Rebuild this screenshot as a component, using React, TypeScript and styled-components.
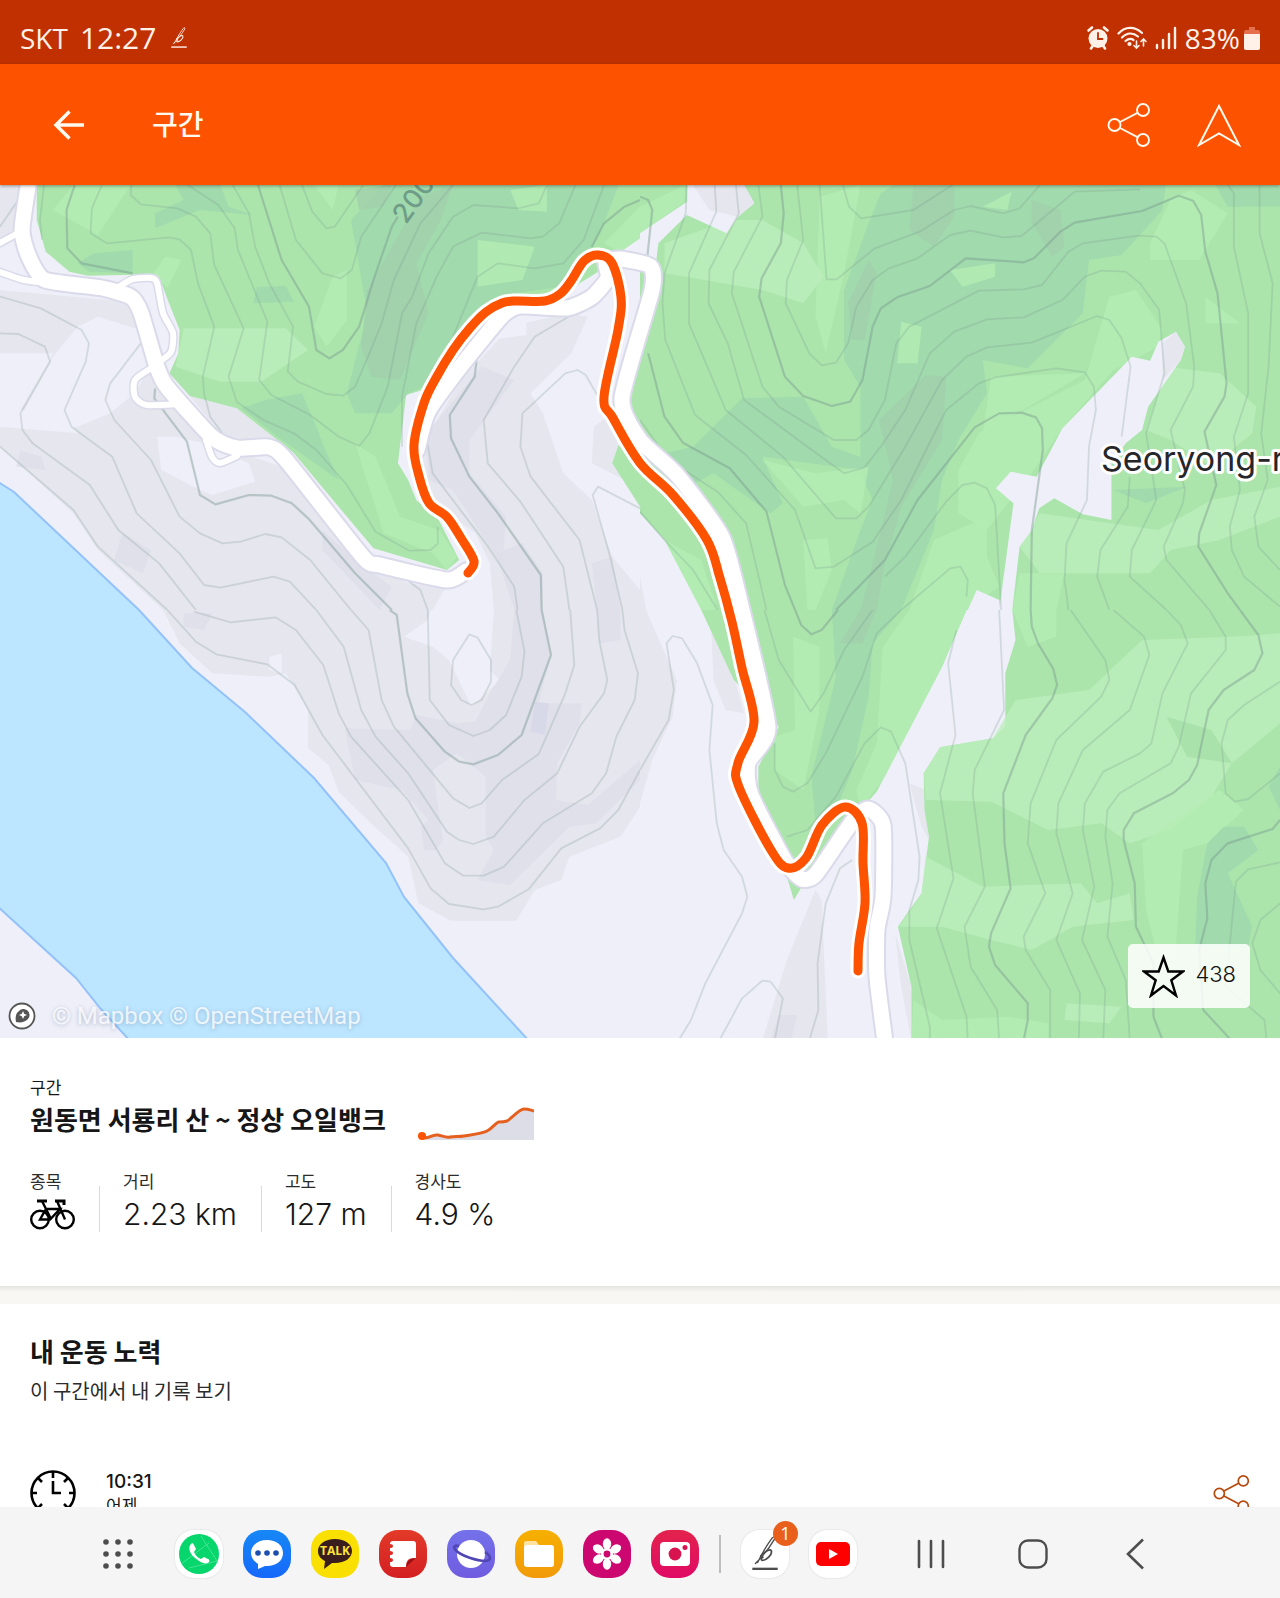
import React from "react";
import styled, { createGlobalStyle, css } from "styled-components";

const latin = `Inter, "Noto Sans CJK KR", sans-serif`;
const korean = `"Noto Sans CJK KR", "Noto Sans", sans-serif`;

const GlobalStyle = createGlobalStyle`
  *, *::before, *::after { box-sizing: border-box; }
  body { margin: 0; background: #fff; color: #161616; font-family: ${korean}; }
  button { margin: 0; padding: 0; border: 0; background: none; color: inherit; font: inherit; cursor: pointer; }
  h1, h2, p, dl, dt, dd { margin: 0; }
  svg { display: block; }
`;

/* ---------- shell ---------- */

const Screen = styled.div`
  display: flex;
  flex-direction: column;
  height: 100vh;
  overflow: hidden;
`;

const Scroll = styled.main`
  flex: 1;
  min-height: 0;
  overflow: hidden;
`;

const StatusBar = styled.div`
  display: flex;
  align-items: center;
  justify-content: space-between;
  flex: none;
  height: 64px;
  padding: 12px 20px 0;
  background: #c03000;
  color: #fff0e8;
  font: 400 30px/40px "Open Sans", "Noto Sans", sans-serif;
`;

const StatusGroup = styled.div<{ $gap: number }>`
  display: flex;
  align-items: center;
  gap: ${(p) => p.$gap}px;
`;

const Carrier = styled.span`
  font-size: 28px;
`;

const AppBar = styled.header`
  display: flex;
  align-items: center;
  flex: none;
  height: 121px;
  padding: 0 30px 0 45px;
  background: #fd5200;
  color: #fffaf0;
  position: relative;
  z-index: 1;
  box-shadow: 0 1px 3px rgba(60, 60, 40, 0.5);
`;

const BarTitle = styled.h1`
  flex: 1;
  margin: 0 0 4px 59px;
  font: 500 28px/40px ${korean};
`;

const IconButton = styled.button`
  display: grid;
  place-items: center;
  width: 48px;
  height: 48px;
`;

const BarActions = styled.div`
  display: flex;
  gap: 42px;
  padding-right: 7px;
`;

/* ---------- map ---------- */

const MapBox = styled.section`
  position: relative;
  overflow: hidden;

  > svg {
    width: 100%;
    height: auto;
  }
`;

const Attribution = styled.p`
  position: absolute;
  left: 8px;
  bottom: 6px;
  display: flex;
  align-items: center;
  gap: 16px;
  color: rgba(255, 255, 255, 0.8);
  font: 400 24px/32px Roboto, sans-serif;
  text-shadow: 0 1px 4px rgba(90, 110, 150, 0.4);
`;

const StarButton = styled.button`
  position: absolute;
  right: 30px;
  bottom: 30px;
  display: flex;
  align-items: center;
  gap: 10px;
  height: 64px;
  padding: 0 14px;
  border-radius: 5px;
  background: rgba(255, 255, 255, 0.85);
  color: #111;
  font: 300 22px/28px ${latin};
`;

const StarCount = styled.span`
  padding-bottom: 4px;
`;

/* ---------- segment details ---------- */

const Details = styled.section`
  padding: 38px 30px 50px;
`;

const TitleRow = styled.div`
  display: flex;
  align-items: flex-end;
  gap: 32px;
`;

const Label = styled.p`
  font-size: 17px;
  line-height: 22px;
`;

const Heading = styled.h2`
  font: 700 26px/42px ${korean};
`;

const Stats = styled.dl`
  display: flex;
  align-items: flex-end;
  margin-top: 30px;
`;

const Stat = styled.div`
  position: relative;
  padding-right: 24px;

  & + & {
    padding-left: 24px;
  }

  & + &::before {
    content: "";
    position: absolute;
    left: 0;
    bottom: 4px;
    width: 1px;
    height: 46px;
    background: #d9d9dc;
  }
`;

const StatName = styled.dt`
  color: #2c2c2c;
  font-size: 17px;
  line-height: 22px;
`;

const StatValue = styled.dd`
  display: flex;
  align-items: center;
  height: 44px;
  font: 300 30px/44px ${latin};
`;

const Gap = styled.div`
  height: 18px;
  background: linear-gradient(#e4e4e2, #f8f7f3 6px);
`;

const Efforts = styled.section`
  padding: 26px 30px 0;
`;

const Hint = styled.p`
  color: #2c2c2c;
  font-size: 20px;
  line-height: 38px;
`;

const EffortRow = styled.div`
  display: flex;
  align-items: center;
  gap: 30px;
  margin-top: 60px;
`;

const EffortText = styled.div`
  flex: 1;
`;

const EffortTime = styled.p`
  font: 500 19px/24px ${latin};
`;

const EffortDay = styled.p`
  font-size: 17px;
  line-height: 22px;
`;

const ShareButton = styled.button`
  color: #b8480c;
`;

/* ---------- dock ---------- */

const Dock = styled.nav`
  display: flex;
  align-items: center;
  justify-content: space-between;
  flex: none;
  height: 91px;
  padding: 2px 121px 0 94px;
  background: #f5f5f5;
  color: #4d4d4d;
`;

const DockApps = styled.div`
  display: flex;
  align-items: center;
  gap: 20px;
`;

const Launcher = styled(IconButton)`
  margin-right: 13px;
`;

const DockDivider = styled.span`
  width: 2px;
  height: 38px;
  background: #bdbdbd;
`;

const DockNav = styled.div`
  display: flex;
  gap: 54px;
`;

const AppButton = styled.button<{ $fill: string; $outlined?: boolean }>`
  position: relative;
  display: grid;
  place-items: center;
  width: 48px;
  height: 48px;
  border-radius: 19px;
  background: ${(p) => p.$fill};
  ${(p) => p.$outlined && css`box-shadow: 0 0 1px 1px #e9e9e9;`}
`;

const Bubble = styled.span`
  position: relative;
  display: grid;
  place-items: center;

  > span {
    position: absolute;
    top: 7px;
    color: #ffe33a;
    font: 700 12px/14px "Open Sans", sans-serif;
  }
`;

const Count = styled.span`
  position: absolute;
  top: -9px;
  right: -9px;
  width: 25px;
  height: 25px;
  border-radius: 50%;
  background: #e8601c;
  color: #fff;
  font: 400 18px/25px "Open Sans", sans-serif;
  text-align: center;
`;

/* ---------- icons ---------- */

const ShareIcon = ({ size, stroke }: { size: number; stroke: number }) => (
  <svg width={size} height={size} viewBox="0 0 44 44" fill="none" stroke="currentColor" strokeWidth={stroke}>
    <circle cx="7.5" cy="22" r="6" />
    <circle cx="36" cy="7" r="6" />
    <circle cx="36" cy="37" r="6" />
    <path d="M13 19 30.5 9.8M13 25l17.5 9.2" />
  </svg>
);

const ScriptB = ({ size }: { size: number }) => (
  <svg width={size} height={size} viewBox="0 0 34 34" fill="none" stroke="currentColor" strokeLinecap="round">
    <path d="M8 26C15 19 22 10 26 3c1-3-2-2-3 0-6 8-10 16-13 22" strokeWidth="1.3" />
    <path d="M13 19c4-5 9-7 10-5 1 4-5 9-8 9-2 0-2-2 0-3" strokeWidth="1.7" />
    <path d="M5 31h24" strokeWidth="2.2" strokeLinecap="butt" />
  </svg>
);

/* ---------- map data ---------- */

type Patch = [fill: string, points: string];
type Tile = { x: number; y: number; patches: Patch[]; minor: string; major: string };

const LAND = "#eeeff8";
const FOREST = "#abe5ac";
const LIGHT = "#b4edb4";
const PALE = "#bcedbc";
const DEEP = "#a1daac";
const SHADE = "#a1d0ad";
const HILL = "#e5e6ee";
const SLOPE = "#dddee8";

const veils = [LIGHT, PALE, SHADE, SLOPE];

const tiles: Tile[] = [
  {
    x: 0,
    y: 180,
    patches: [
      [HILL, "0,330 310,365 370,560 500,780 690,860 880,1140 1000,1210 1090,1225 1060,1290 400,1290 240,1110 180,1000 0,800 0,740 190,760 160,700 50,690 130,520 0,520"],
      [HILL, "0,15 45,15 30,150 0,190"],
      [LAND, "190,440 240,410 345,450 370,560 330,640 270,700 190,740 50,740 60,690 130,530"],
      [LAND, "385,770 430,770 500,790 610,850 625,905 520,945 490,930 395,870"],
      [SLOPE, "50,812 100,830 112,870 40,860"],
      [SLOPE, "300,1060 370,1110 350,1180 280,1140"],
      [SLOPE, "790,1050 880,1150 960,1220 930,1290 790,1110"],
      [HILL, "1390,400 1440,410 1400,520 1300,640 1330,700 1380,880 1450,960 1500,1130 1568,1230 1568,1290 1210,1290 1200,1150 1165,1060 1060,970 1030,800 1130,600 1250,440"],
      [HILL, "465,648 580,685 680,780 560,790"],
      [SLOPE, "1180,560 1260,600 1150,780 1150,880 1240,1010 1230,1160 1110,930 1050,900 1045,760"],
      [SLOPE, "1215,1120 1280,1090 1330,1180 1330,1290 1260,1290"],
      [SLOPE, "1450,1150 1500,1130 1520,1290 1463,1290"],
      [HILL, "1455,740 1500,700 1530,900 1450,850"],
      [LAND, "1225,430 1290,420 1290,465 1200,480"],
      [FOREST, "90,0 90,120 112,215 170,275 215,287 388,283 408,350 440,450 437,520 415,580 465,648 580,685 680,780 720,820 915,1105 1095,1170 1125,1140 1075,1020 1020,960 1000,900 975,850 995,645 1060,620 1200,420 1270,350 1350,365 1400,330 1420,310 1480,265 1500,230 1520,215 1568,175 1568,0"],
      [FOREST, "1568,430 1540,600 1530,650 1545,700 1568,760"],
      [FOREST, "1515,795 1500,850 1568,980 1568,860"],
      [DEEP, "860,120 950,0 1520,0 1480,130 1440,230 1380,320 1260,340 1180,400 1060,610 1000,640 960,700 870,700 850,640 900,400"],
      [SHADE, "1030,50 1110,15 1080,120 1020,250 1050,400 980,600 910,590 885,500 900,330"],
      [SHADE, "870,30 960,15 940,80 880,90"],
      [LIGHT, "1480,190 1568,80 1568,175 1520,215"],
      [DEEP, "430,15 540,15 560,80 620,105 490,90 380,145 380,100 450,60"],
      [DEEP, "230,220 325,210 325,280 220,275 190,250"],
      [DEEP, "630,320 700,318 720,365 620,370"],
      [DEEP, "650,660 740,640 775,740 790,790 830,900 680,770 590,685"],
      [LIGHT, "180,15 320,15 240,165 130,90"],
      [PALE, "450,445 700,445 755,510 640,605 540,605 430,560"],
      [LIGHT, "445,240 405,230 375,280 410,325"],
      [LIGHT, "815,290 850,270 850,420 800,500 770,440"],
      [LIGHT, "870,790 920,830 980,1010 1075,1050 1120,1130 1095,1170 1060,1120 940,1060"],
      [LIGHT, "770,15 830,15 815,90"],
      [LIGHT, "1170,180 1310,200 1280,300 1170,320"],
      [LIGHT, "1250,30 1340,15 1340,95 1270,90"],
    ],
    minor:
      "M250,15L225,85 222,160 262,190 415,172 440,178 468,210 485,310 525,440 497,590 500,640 515,710 545,760M322,15L320,45 345,73 435,85 480,110 515,160 525,255 597,445 560,590 580,665 645,720 720,760 775,810 850,915 920,1055 1003,1112 1055,1110 1073,1090 1072,1040M460,15L535,75 575,145 583,210 655,425 635,600 665,645 760,705 830,770 880,798 905,760 950,620 985,400 1010,350 1050,220 1110,110 1160,75 1270,85 1320,70 1340,15M570,15L610,100 625,200 660,310 718,440 705,575 730,605 800,642 840,647 870,620 905,520 935,430 965,300 1030,130 1110,15M685,15L725,180 790,280 835,295 862,270 885,170 970,15M740,15L765,95 800,145 820,140 890,15M1410,15L1370,130 1330,170 1300,175 1180,158 1110,200 1070,290 1020,430 985,650 985,800M1480,15L1430,180 1380,250 1310,265 1220,250 1170,290 1150,350 1110,470M108,15L98,120 103,180M50,50L0,140M0,350L100,385 200,450 218,490 210,545 158,690 175,740 275,830 335,1000 440,1120 500,1215 540,1223 670,1190 710,1205 775,1290M0,460L45,462 110,500 123,545 50,700 55,750 80,790 220,915 290,1050 390,1150 480,1290M345,490L270,610 258,660 280,720 370,840 440,1010 490,1060 545,1090 590,1085 650,1062 690,1072 760,1140 860,1290M0,800L180,990 240,1100 410,1290M1400,405L1310,470 1260,560 1185,720 1195,850 1275,965 1380,1160 1395,1290M1470,660L1435,585 1415,570 1385,580 1280,700 1275,800 1300,890 1420,1080 1463,1290M1040,740L1060,880 1190,1090 1260,1220 1268,1290M1568,985L1465,920 1452,945 1495,1130 1525,1290M975,1180L1030,1230 1048,1290",
    major:
      "M183,15L163,90 165,205 200,250 325,280M632,15L690,240 757,380 775,510 807,535 840,510 880,440 915,300 960,140 975,110M1568,60L1530,80 1480,130 1450,200M380,625L378,655 458,785 490,945 528,973 610,945 665,947 715,970 755,1015 870,1180 960,1290M1168,535L1163,590 1102,705 1105,775 1150,890 1220,1000 1325,1185 1327,1290",
  },
  {
    x: 640,
    y: 180,
    patches: [
      [FOREST, "0,0 1568,0 1568,1290 0,1290"],
      [DEEP, "590,40 640,0 1290,0 1280,90 1180,225 1100,240 1085,400 950,565 840,540 850,640 780,780 740,900 720,1050 640,1290 470,1290 540,1050 570,960 540,880 540,620 500,540 500,330 560,130"],
      [DEEP, "130,800 250,655 400,650 470,800 560,840 540,870 300,830 350,970 320,1000 180,880 120,920 60,820"],
      [DEEP, "1410,15 1568,15 1568,80 1440,80"],
      [SHADE, "585,720 700,585 750,590 740,780 680,900 640,980 600,1150 580,1290 540,1290 560,1200 620,900"],
      [SHADE, "670,20 770,15 770,110 720,200 660,150"],
      [SHADE, "560,240 580,280 550,480 520,480 510,370"],
      [SHADE, "960,60 1030,90 1040,200 1010,230 960,130"],
      [LIGHT, "440,50 540,15 500,280 455,520 430,410"],
      [LIGHT, "0,80 110,15 110,65 0,160"],
      [PALE, "60,190 220,120 300,120 400,190 450,290 400,370 300,330 60,280"],
      [LIGHT, "760,270 870,250 870,290 790,320"],
      [LIGHT, "640,425 690,440 680,550 630,550"],
      [LIGHT, "840,80 910,35 900,90"],
      [LIGHT, "1300,60 1350,30 1440,100 1370,240 1250,240 1250,190"],
      [LIGHT, "1150,350 1215,330 1280,450 1270,500 1160,570 1035,745 960,880 850,1050 780,1000 780,870 830,760 1090,600"],
      [LIGHT, "860,590 1090,580 1035,620 840,760"],
      [PALE, "1290,560 1420,580 1510,680 1500,760 1400,860 1300,780 1240,750"],
      [DEEP, "1160,930 1340,920 1240,970"],
      [PALE, "980,1000 1270,1050 1400,960 1568,920 1568,1010 1420,1080 1300,1110 1250,1180 980,1180 930,1100"],
      [LIGHT, "930,1180 1040,1180 1020,1290 912,1290"],
      [LIGHT, "1385,350 1470,430 1385,430"],
      [LIGHT, "300,840 430,880 560,860 540,1000 500,960 400,980"],
      [LIGHT, "400,1080 460,1075 470,1170 430,1290 410,1290"],
      [LIGHT, "720,1080 850,1010 850,1130 880,1220 800,1290 660,1290"],
      [LIGHT, "60,1080 150,1140 190,1290 140,1290"],
      [LAND, "115,15 255,15 280,70 240,110 212,160 115,105 45,190 40,240 0,235 0,160 115,65"],
      [HILL, "130,15 255,15 280,70 240,110 170,90"],
      [LAND, "0,1000 60,1080 150,1290 0,1290"],
      [HILL, "0,1190 15,1290 0,1290"],
      [LAND, "1313,455 1335,500 1325,540 1245,680 1230,750 1190,790 1155,850 1155,1020 1085,1003 1015,955 978,985 960,1050 930,1100 912,1290 880,1290 915,970 872,925 908,875 972,890 1035,745 1205,530 1250,542 1270,485"],
      [HILL, "1313,455 1335,500 1325,540 1280,600 1280,490"],
      [LAND, "825,1230 880,1260 882,1290 803,1290"],
    ],
    minor:
      "M385,15L400,180 360,300 357,370 415,520 445,556 480,548 510,490 530,380 570,300 610,265 680,235 760,165 810,152 890,172 935,168 1065,35 1225,28M440,15L457,298 482,298 575,205 685,155 770,90 810,78 890,100 930,85 980,15M497,15L512,80 542,115 670,90 765,15M290,15L300,110 230,275 225,340 300,620 340,680 475,780 530,780 560,750 600,660 628,490 660,440 830,332 940,328 985,315 1050,215 1085,190 1220,167 1265,170 1285,190 1338,370 1358,560 1355,620 1300,750 1335,930 1330,970 1283,1100 1290,1140 1395,1290M235,15L242,100 170,270 168,370 215,490 255,660 410,800 500,880 550,862 590,800 650,690 710,520 770,455 850,418 940,412 1035,360 1090,290 1130,272 1190,275 1225,310 1272,390 1285,580 1240,760 1265,960 1205,1110 1200,1190 1290,1290M183,15L187,95 120,280 120,430 210,690 350,830 480,1015 530,1015 560,980 650,800 740,600 800,530 850,502 960,488 1120,408 1150,420 1180,475 1202,560 1180,770M115,15L112,100 60,280 55,370 62,480 135,705 260,825 380,990 430,1165 475,1160 570,1085 640,960 750,690 830,610 870,592 1020,565 1090,577 1112,620 1117,690 1100,800 1095,960 1045,1090 1040,1200 1050,1290M0,720L70,840 190,935 260,1030 310,1290M640,1290L760,1165 785,1160 803,1200 800,1250M600,1190L650,1130 750,965 790,915 820,908 850,925 870,975 885,1290M1440,15L1455,40 1455,200 1490,400 1490,640 1455,770 1470,930 1445,1040 1450,1110 1480,1190 1568,1280M1518,15L1518,160 1550,310 1540,560 1522,760 1538,900 1505,1010 1515,1100 1568,1170M1200,890L1195,980 1128,1110 1120,1190 1150,1290M0,995L60,1080 130,1170 190,1290",
    major:
      "M345,15L352,100 345,190 298,295 292,350 355,590 400,648 470,678 515,665 545,600 570,440 590,385 630,352 710,318 798,235 940,247 965,235 1030,155 1065,128 1230,93 1320,47 1355,62 1375,105 1385,215 1415,340 1437,610 1432,650 1383,755 1412,915 1370,1060 1368,1100 1440,1240 1470,1290M0,50L20,60 30,90 18,230M20,520L60,710 105,788 220,865 310,995 355,1215 380,1290M480,1290L600,1140 680,960 820,742 880,700 935,698 970,712 985,745 987,810 960,1050 957,1290",
  },
  {
    x: 0,
    y: 610,
    patches: [
      [HILL, "400,0 440,100 520,190 660,200 700,190 755,300 755,415 805,465 830,545 900,630 1000,740 1025,880 1105,932 1265,932 1310,840 1375,810 1395,740 1520,680 1568,590 1568,0"],
      [LAND, "1055,0 1210,0 1200,180 1225,210 1155,290 1100,150 1060,110 990,80 1048,30"],
      [LAND, "660,140 690,130 690,190 660,180"],
      [SLOPE, "450,10 520,10 500,60 450,50"],
      [SLOPE, "845,355 1005,360 1020,315 1120,340 1165,335 1200,250 1250,150 1260,0 1330,0 1350,130 1320,280 1425,280 1420,340 1365,460 1362,570 1440,585 1568,450 1568,510 1460,640 1395,650 1250,825 1170,810 1210,720 1190,680 1190,500 1150,460 1120,430 1060,480 1085,690 1070,720 1040,720 1030,650 1050,630 985,540 870,510"],
      [SLOPE, "1463,0 1520,0 1520,90 1470,100"],
      ["#d8d9e8", "1310,275 1345,280 1335,375 1300,365"],
    ],
    minor:
      "M1048,0L1053,270 1100,345 1160,378 1200,360 1240,315 1278,200 1285,125 1265,0M1150,73L1170,83 1203,150 1203,215 1180,270 1155,285 1130,270 1105,225 1110,150ZM860,0L903,60 935,270 965,350 1110,565 1150,594 1180,580 1230,510 1320,432 1385,250 1407,165 1397,0M775,0L842,110 885,300 920,380 1000,490 1095,665 1125,690 1160,702 1210,680 1285,570 1365,490 1420,350 1480,250 1488,210 1468,90 1463,0M475,5L565,37 675,22 725,60 792,165 830,310 860,380 1000,570 1090,760 1135,797 1185,797 1235,770 1330,640 1450,550 1485,490 1510,380 1555,270 1563,190 1530,60 1525,0M410,0L480,95 530,133 655,163 722,225 790,375 1000,715 1055,835 1100,882 1185,898 1220,890 1295,838 1375,715 1470,655 1515,600 1568,480",
    major: "M955,0L972,15 998,250 1018,325 1090,425 1125,455 1160,463 1220,435 1278,375 1350,135 1327,0",
  },
  {
    x: 640,
    y: 610,
    patches: [
      [HILL, "0,0 15,0 50,100 90,210 80,320 30,450 0,580"],
      [HILL, "430,840 445,870 460,1290 300,1290 360,1050"],
      [SLOPE, "340,1215 385,1215 370,1290 320,1290"],
      [HILL, "175,60 230,200 255,310 210,300 180,210"],
      [HILL, "660,520 700,540 708,690 690,650"],
      [HILL, "625,970 665,1130 665,1290 640,1130"],
      [FOREST, "150,0 800,0 740,170 620,450 580,545 540,600 440,740 377,870 350,760 290,560 290,470 340,350 230,210"],
      [DEEP, "470,0 640,0 570,100 560,260 520,480 480,600 430,640 420,500 480,200"],
      [SHADE, "540,0 580,0 545,100 490,100"],
      [LIGHT, "375,80 440,110 440,300 400,540 330,480 330,380 380,360"],
      [LIGHT, "595,110 660,0 800,0 740,170 600,500 540,600 530,540 580,400"],
      [FOREST, "912,0 920,90 895,190 895,350 865,385 735,412 695,490 697,600 708,680 690,850 660,900 632,950 665,1130 665,1290 1568,1290 1568,0"],
      [PALE, "920,270 1100,240 1230,90 1450,80 1568,70 1568,340 1450,460 1400,560 1300,660 1200,700 1130,640 1000,660 860,575 700,570 695,490 735,412 865,385"],
      [LIGHT, "1230,700 1300,640 1420,540 1480,600 1390,700 1330,720 1310,1060 1260,1000 1240,900"],
      [PALE, "700,740 840,830 1080,820 1120,880 1200,850 1210,930 1060,950 960,1020 860,990 740,950 635,950 690,850"],
      [DEEP, "1365,860 1390,700 1430,650 1480,650 1515,720 1440,790 1500,950 1490,1010 1360,1010"],
      ["#aae2ab", "1290,320 1400,360 1450,460 1340,440"],
      [LIGHT, "912,0 1020,0 1020,80 950,110"],
      [PALE, "1045,1180 1180,1190 1150,1240 1040,1230"],
      [LIGHT, "670,1170 740,1230 900,1220 1000,1240 1000,1290 665,1290"],
      [DEEP, "1568,470 1540,530 1568,600"],
    ],
    minor:
      "M305,0L340,150 418,305 450,250 500,120 570,0M640,0L580,70 545,200 455,430 410,520 375,545 350,530 330,480 330,400M360,680L410,660 480,560 550,400 590,352 615,365 650,460 685,740 682,810 660,900 660,990 710,1250 710,1290M775,60L755,160 773,375 735,550 768,805 727,955 800,1220 803,1290M880,0L892,300 820,480 815,550 845,830 795,950 810,1070 875,1200 880,1290M1055,0L1140,150 1150,210 1130,260 1020,390 957,580 950,700 993,850 940,980 945,1020 1005,1140 1005,1290M1160,0L1235,80 1248,135 1200,300 1085,420 1025,580 1020,670 1060,850 1020,990 1078,1150 1075,1290M1290,0L1325,45 1342,100 1280,250 1253,400 1225,430 1135,485 1090,580 1085,660 1113,830 1083,990 1140,1140 1135,1290M1395,0L1435,80 1435,120 1350,250 1320,410 1300,460 1175,550 1145,600 1140,680 1158,820 1145,980 1190,1110 1200,1290M1568,215L1480,285 1440,330 1425,400 1435,550 1458,575 1490,567 1568,490M1568,757L1490,778 1460,815 1435,1130 1530,1230 1535,1290M1568,880L1520,930 1500,1000 1520,1080 1568,1150M0,480L70,330 83,240 65,100 80,78 103,85 140,160 178,285 170,420 188,640 205,720 250,800 263,860 250,910 160,1120 125,1230 95,1290M520,750L490,775 455,880 435,1060 437,1200 415,1290M195,1290L250,1165 300,1112 320,1115 350,1165 330,1290",
    major:
      "M380,0L395,45 420,73 445,60 485,0M957,0L960,50 975,100 1012,175 1022,225 1010,265 945,375 890,550 893,700 908,835 860,970 855,1010 870,1065 950,1180 950,1230 940,1290M1470,0L1515,75 1525,130 1505,180 1430,240 1393,300 1365,465 1345,510 1305,550 1210,610 1185,660 1185,690 1212,820 1215,950 1258,1060 1258,1220 1280,1290M1568,630L1550,657 1440,700 1400,750 1385,820 1390,925 1370,1020 1380,1200 1448,1290",
  },
];

type Point = [number, number];

const route: Point[] = [
  [468, 573], [474, 561], [461, 538], [447, 517], [429, 503], [419, 476], [414, 445], [424, 403], [436, 378],
  [453, 350], [470, 328], [486, 312], [502, 303], [516, 301], [545, 301], [560, 294], [571, 281], [584, 261],
  [598, 255], [612, 263], [621, 297], [618, 330], [604, 397], [613, 418], [640, 463], [673, 495], [707, 540],
  [720, 578], [732, 622], [742, 668], [754, 722], [738, 763], [739, 787], [771, 850], [788, 868], [806, 858],
  [822, 825], [845, 807], [862, 823], [863, 863], [865, 903], [859, 943], [858, 971],
];

const roads: Point[][] = [
  [[29, 180], [22, 230], [29, 257], [45, 280], [102, 288], [131, 297], [141, 313], [157, 367], [167, 387], [212, 437], [237, 448], [269, 447], [286, 460], [363, 557], [380, 565], [447, 580], [466, 571]],
  [[417, 450], [428, 412], [461, 366], [502, 316], [520, 306], [567, 308], [592, 297], [608, 278], [606, 262], [620, 259], [650, 266], [652, 290], [622, 398], [640, 440], [677, 475], [722, 537], [742, 610], [768, 727], [748, 763], [751, 795], [785, 861], [802, 879], [816, 874], [852, 822], [868, 809], [883, 825], [883, 897], [877, 930], [877, 977], [885, 1042]],
];

const lanes: Point[][] = [
  [[0, 243], [18, 233]],
  [[0, 272], [24, 280], [49, 283]],
  [[120, 286], [133, 279], [151, 278], [157, 283], [163, 313], [173, 333], [171, 352], [159, 362]],
  [[153, 367], [135, 380], [135, 397], [147, 405], [180, 404]],
  [[206, 440], [212, 457], [220, 463], [237, 456]],
];

const smooth = (pts: Point[], t = 6) =>
  pts.reduce((d, p, i) => {
    if (i === 0) return `M${p}`;
    const a = pts[i - 2] ?? pts[i - 1];
    const b = pts[i - 1];
    const n = pts[i + 1] ?? p;
    return `${d}C${b[0] + (p[0] - a[0]) / t},${b[1] + (p[1] - a[1]) / t} ${p[0] - (n[0] - b[0]) / t},${p[1] - (n[1] - b[1]) / t} ${p}`;
  }, "");

const MapTile = ({ x, y, patches, minor, major }: Tile) => (
  <svg x={x} y={y} width="640" height="430" viewBox="0 0 1568 1290" preserveAspectRatio="none">
    {patches.map(([fill, points], i) => (
      <polygon key={i} fill={fill} points={points} opacity={veils.includes(fill) ? 0.8 : 1} />
    ))}
    <g fill="none" strokeLinejoin="round" stroke="#78968f">
      <path d={minor} vectorEffect="non-scaling-stroke" strokeWidth="1.8" opacity=".24" />
      <path d={major} vectorEffect="non-scaling-stroke" strokeWidth="2.2" opacity=".42" />
    </g>
  </svg>
);

const RouteMap = () => (
  <svg viewBox="0 185 1280 853" role="img" aria-label="구간 지도">
    <rect y="180" width="1280" height="860" fill={LAND} />
    {tiles.map((t) => (
      <MapTile key={`${t.x}-${t.y}`} {...t} />
    ))}
    <path
      d="M-5 480 14 492 139 610 192 668 245 712 314 778 386 863 404 897 453 958 530 1042H131L100 1008 76 978-5 904Z"
      fill="#bce6ff"
      stroke="#93c2fb"
      strokeWidth="2"
    />
    <g fill="none" strokeLinejoin="round" strokeLinecap="round">
      <g stroke="#dadaea">
        {lanes.map((l, i) => <path key={i} d={smooth(l, 8)} strokeWidth="9" />)}
        {roads.map((r, i) => <path key={i} d={smooth(r, 10)} strokeWidth="19" />)}
      </g>
      <g stroke="#fff">
        {lanes.map((l, i) => <path key={i} d={smooth(l, 8)} strokeWidth="6" />)}
        {roads.map((r, i) => <path key={i} d={smooth(r, 10)} strokeWidth="15" />)}
        <path d={smooth(route)} strokeWidth="15" />
      </g>
      <path d={smooth(route)} stroke="#fd5200" strokeWidth="9" />
    </g>
    <text transform="translate(406 225) rotate(-54)" fill="#6f9c87" fontFamily="Inter, sans-serif" fontSize="27" fontWeight="500">
      200
    </text>
    <text x="1101" y="471" fill="#26262a" stroke="#fff" strokeWidth="6" strokeLinejoin="round" paintOrder="stroke" fontFamily="Inter, sans-serif" fontSize="34">
      Seoryong-r
    </text>
  </svg>
);

/* ---------- dock apps ---------- */

const apps = [
  {
    name: "전화",
    fill: "#fff",
    outlined: true,
    icon: (
      <svg width="40" height="40" viewBox="0 0 40 40">
        <circle cx="20" cy="20" r="20" fill="#06d66c" />
        <path d="M22 2 38 27 10 34M30 9 2 30" stroke="#5feaa0" fill="none" strokeWidth=".7" />
        <path d="M12 10c-3 3-2 9 4 14s11 7 14 4c1-1 0-3-1-3l-4-2-3 2c-3-1-6-4-7-7l2-3-2-4c-1-2-2-2-3-1z" fill="#fff" />
      </svg>
    ),
  },
  {
    name: "메시지",
    fill: "linear-gradient(#1688f5,#1668fb)",
    icon: (
      <svg width="34" height="34" viewBox="0 0 34 34">
        <path d="M17 3C8 3 1 8 1 16c0 5 3 8 7 11l0 5 7-3h2c9 0 16-5 16-13S26 3 17 3z" fill="#fff" />
        <g fill="#1a4fb0">
          <circle cx="8" cy="16" r="2.8" />
          <circle cx="17" cy="16" r="2.8" />
          <circle cx="26" cy="16" r="2.8" />
        </g>
      </svg>
    ),
  },
  {
    name: "카카오톡",
    fill: "#f9e000",
    icon: (
      <Bubble>
        <svg width="36" height="34" viewBox="0 0 36 34">
          <path d="M18 2C8 2 1 7 1 14c0 5 3 8 7 10l-1 8 8-6h3c10 0 17-5 17-12S28 2 18 2z" fill="#3a1d1d" />
        </svg>
        <span>TALK</span>
      </Bubble>
    ),
  },
  {
    name: "노트",
    fill: "linear-gradient(#e23a28,#d41f22)",
    icon: (
      <svg width="30" height="30" viewBox="0 0 30 30">
        <path d="M5 2h20q3 0 3 3v14q-7 0-8 2-2 2-2 7H5q-3 0-3-3v-2q3 0 3-2t-3-2v-3q3 0 3-2t-3-2V9q3 0 3-2T2 5q0-3 3-3z" fill="#fff" />
        <path d="M18 28q1-9 10-9z" fill="#a01018" />
      </svg>
    ),
  },
  {
    name: "인터넷",
    fill: "linear-gradient(#7471ea,#6f5ce0)",
    icon: (
      <svg width="44" height="38" viewBox="0 0 44 38">
        <circle cx="22" cy="19" r="14" fill="#fff" />
        <path d="M10 11C2 9 4 16 16 21s25 7 25 2c0-2-3-5-5-6" fill="none" stroke="#5046b4" strokeWidth="2.6" />
      </svg>
    ),
  },
  {
    name: "내 파일",
    fill: "linear-gradient(#f6b000,#f29a0a)",
    icon: (
      <svg width="32" height="30" viewBox="0 0 32 30">
        <path d="M1 8V4q0-2 2-2h10l3 4z" fill="#ffe2a0" />
        <rect x="1" y="6" width="30" height="22" rx="3" fill="#fff" />
      </svg>
    ),
  },
  {
    name: "갤러리",
    fill: "#cc0870",
    icon: (
      <svg width="34" height="34" viewBox="-17 -17 34 34" fill="#fff">
        {[0, 60, 120, 180, 240, 300].map((a) => (
          <ellipse key={a} cx="0" cy="-10" rx="4.2" ry="5.8" transform={`rotate(${a})`} />
        ))}
        <circle r="6" />
        <circle r="3.4" fill="#cc0870" />
      </svg>
    ),
  },
  {
    name: "카메라",
    fill: "linear-gradient(#e3234c,#e00a66)",
    icon: (
      <svg width="32" height="26" viewBox="0 0 32 26">
        <rect x="1" y="1" width="30" height="24" rx="4" fill="#fff" />
        <circle cx="16" cy="13" r="6.4" fill="#d81450" />
        <circle cx="26" cy="6.5" r="2.5" fill="#d81450" />
      </svg>
    ),
  },
];

const App = () => (
  <>
    <GlobalStyle />
    <Screen>
      <StatusBar>
        <StatusGroup $gap={12}>
          <Carrier>SKT</Carrier>
          <span>12:27</span>
          <ScriptB size={22} />
        </StatusGroup>
        <StatusGroup $gap={8}>
          <svg width="22" height="24" viewBox="0 0 22 24" fill="none" stroke="currentColor" strokeLinecap="round">
            <circle cx="11" cy="12.5" r="9.5" fill="currentColor" stroke="none" />
            <path d="M1.5 4.5 5 1.5M20.5 4.5 17 1.5M4 22.5l2-3M18 22.5l-2-3" strokeWidth="2.6" />
            <path d="M11 7v6h4.5" stroke="#c03000" strokeWidth="1.8" />
          </svg>
          <svg width="30" height="24" viewBox="0 0 30 24" fill="none" stroke="currentColor" strokeWidth="2.2" strokeLinecap="round">
            <path d="M1.5 7.5C8 0 18 0 25 7M5 11.5c5-5 11-5 16-1M8.5 15c3-2.5 6-2.5 8-1" />
            <circle cx="12.5" cy="18" r="1" fill="currentColor" />
            <path d="M19.5 15v7m-2.5-2.5 2.5 2.5 2.5-2.5M26.500 20v-7m-2.5 2.5 2.5-2.5 2.5 2.5" strokeWidth="1.6" />
          </svg>
          <svg width="22" height="24" viewBox="0 0 22 24" stroke="currentColor" strokeWidth="2.4" strokeLinecap="round">
            <path d="M2 19v3M8 14v8M14 8v14M20 2v20" />
          </svg>
          <StatusGroup $gap={4}>
            <Carrier>83%</Carrier>
            <svg width="16" height="25" viewBox="0 0 16 25">
              <path d="M5 1h6v3h3q2 0 2 2v16q0 2-2 2H2q-2 0-2-2V6q0-2 2-2h3z" fill="#e4704e" />
              <path d="M0 8h16v14q0 2-2 2H2q-2 0-2-2z" fill="currentColor" />
            </svg>
          </StatusGroup>
        </StatusGroup>
      </StatusBar>

      <AppBar>
        <IconButton aria-label="뒤로">
          <svg width="32" height="30" viewBox="0 0 32 30" fill="none" stroke="currentColor" strokeWidth="3.5">
            <path d="M31 15H3M16.5 1.5 3 15l13.5 13.5" />
          </svg>
        </IconButton>
        <BarTitle>구간</BarTitle>
        <BarActions>
          <IconButton aria-label="공유">
            <ShareIcon size={44} stroke={1.9} />
          </IconButton>
          <IconButton aria-label="길찾기">
            <svg width="44" height="44" viewBox="0 0 44 44" fill="none" stroke="currentColor" strokeWidth="2">
              <path d="M22 3 42 42 22 30.5 2 42z" />
            </svg>
          </IconButton>
        </BarActions>
      </AppBar>

      <Scroll>
        <MapBox>
          <RouteMap />
          <Attribution>
            <svg width="28" height="28" viewBox="0 0 28 28">
              <circle cx="14" cy="14" r="12.5" fill="#fff" stroke="#555" strokeWidth="1.8" />
              <path d="M8 20c-1-5 0-9 3-11a6 6 0 0 1 9 8c-3 3-7 4-12 3z" fill="#555" />
              <path d="m15 9 1.2 2.800L19 13l-2.800 1.200L15 17l-1.200-2.800L11 13l2.800-1.200z" fill="#fff" />
            </svg>
            © Mapbox © OpenStreetMap
          </Attribution>
          <StarButton>
            <svg width="43" height="44" viewBox="0 0 43 44" fill="none" stroke="#000" strokeWidth="2.4">
              <path d="M21.5 3.500 26.300 17.500H41L29.300 26.200 34 41.500 21.500 32 9 41.500 13.700 26.200 2 17.500H16.700z" />
            </svg>
            <StarCount>438</StarCount>
          </StarButton>
        </MapBox>

        <Details>
          <TitleRow>
            <div>
              <Label>구간</Label>
              <Heading>원동면 서룡리 산 ~ 정상 오일뱅크</Heading>
            </div>
            <svg width="116" height="36" viewBox="0 0 116 36" role="img" aria-label="고도 그래프">
              <path d="M4 34C12 35 15 30 20 31s8 3 12 2 9 0 14-1 17-2 23-5 9-9 12-9 5 0 8-1 12-12 17-12 6 1 10 2v29H4z" fill="#dcdde6" />
              <path d="M4 34C12 35 15 30 20 31s8 3 12 2 9 0 14-1 17-2 23-5 9-9 12-9 5 0 8-1 12-12 17-12 6 1 10 2" fill="none" stroke="#e5601e" strokeWidth="3" />
              <circle cx="4" cy="32" r="4" fill="#fd5200" />
            </svg>
          </TitleRow>
          <Stats>
            <Stat>
              <StatName>종목</StatName>
              <StatValue>
                <svg width="45" height="31" viewBox="0 0 45 31" fill="none" stroke="#000" strokeWidth="2.4" aria-label="사이클">
                  <circle cx="10" cy="20.5" r="8.8" />
                  <circle cx="35" cy="20.5" r="8.8" />
                  <path d="M10 20.5 16 10h14L20 20.5zM12 2l9 18M35 20.5 27 2" />
                  <path d="M7 2h10M25 2h9v4" strokeWidth="3" />
                </svg>
              </StatValue>
            </Stat>
            <Stat>
              <StatName>거리</StatName>
              <StatValue>2.23 km</StatValue>
            </Stat>
            <Stat>
              <StatName>고도</StatName>
              <StatValue>127 m</StatValue>
            </Stat>
            <Stat>
              <StatName>경사도</StatName>
              <StatValue>4.9 %</StatValue>
            </Stat>
          </Stats>
        </Details>

        <Gap />

        <Efforts>
          <Heading>내 운동 노력</Heading>
          <Hint>이 구간에서 내 기록 보기</Hint>
          <EffortRow>
            <svg width="46" height="46" viewBox="0 0 46 46" fill="none" stroke="#000" strokeWidth="2.6">
              <circle cx="23" cy="23" r="21.5" />
              <path d="M23 2v6M2 23h5M44 23h-5M23 44v-6M8 8l4 4M38 8l-4 4M8 38l4-4M38 38l-4-4M23 11v12h8" />
            </svg>
            <EffortText>
              <EffortTime>10:31</EffortTime>
              <EffortDay>어제</EffortDay>
            </EffortText>
            <ShareButton aria-label="기록 공유">
              <ShareIcon size={37} stroke={2} />
            </ShareButton>
          </EffortRow>
        </Efforts>
      </Scroll>

      <Dock>
        <DockApps>
          <Launcher aria-label="모든 앱">
            <svg width="30" height="30" viewBox="0 0 30 30" fill="currentColor">
              {[3, 15, 27].flatMap((cy) => [3, 15, 27].map((cx) => <circle key={`${cx}-${cy}`} cx={cx} cy={cy} r="2.8" />))}
            </svg>
          </Launcher>
          {apps.map((a) => (
            <AppButton key={a.name} aria-label={a.name} $fill={a.fill} $outlined={a.outlined}>
              {a.icon}
            </AppButton>
          ))}
          <DockDivider />
          <AppButton aria-label="메모" $fill="#fff" $outlined>
            <ScriptB size={36} />
            <Count>1</Count>
          </AppButton>
          <AppButton aria-label="YouTube" $fill="#fff" $outlined>
            <svg width="34" height="24" viewBox="0 0 34 24">
              <rect width="34" height="24" rx="5" fill="#f00" />
              <path d="m13 7 9 5-9 5z" fill="#fff" />
            </svg>
          </AppButton>
        </DockApps>
        <DockNav>
          <IconButton aria-label="최근 앱">
            <svg width="28" height="30" viewBox="0 0 28 30" stroke="currentColor" strokeWidth="2.6" strokeLinecap="round">
              <path d="M2 2v26M14 2v26M26 2v26" />
            </svg>
          </IconButton>
          <IconButton aria-label="홈">
            <svg width="30" height="30" viewBox="0 0 30 30" fill="none" stroke="currentColor" strokeWidth="2.4">
              <rect x="1.5" y="1.5" width="27" height="27" rx="8.5" />
            </svg>
          </IconButton>
          <IconButton aria-label="이전">
            <svg width="18" height="32" viewBox="0 0 18 32" fill="none" stroke="currentColor" strokeWidth="2.6">
              <path d="M17 1.5 2 16l15 14.5" />
            </svg>
          </IconButton>
        </DockNav>
      </Dock>
    </Screen>
  </>
);

export default App;
